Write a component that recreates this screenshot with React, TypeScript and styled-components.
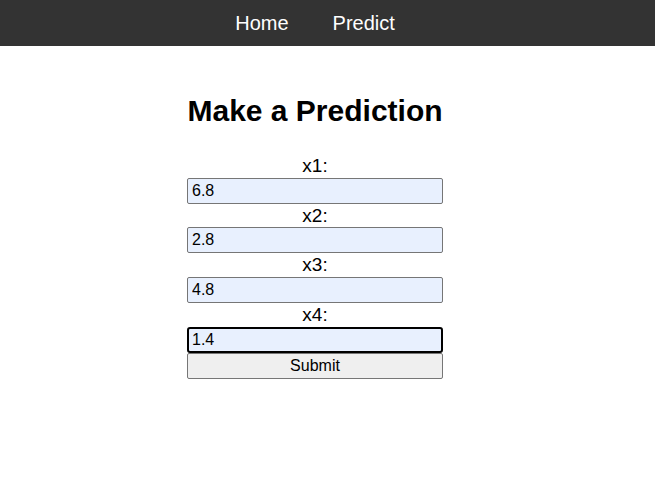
import React from "react";
import styled, { createGlobalStyle } from "styled-components";

const GlobalStyle = createGlobalStyle`
    body {
        margin: 0;
        background: #fff;
        font-family: "Liberation Sans", Arial, Helvetica, sans-serif;
    }
`;

const NavBar = styled.nav`
    background: #333;
    height: 46px;
    width: 100%;
`;

const NavInner = styled.div`
    width: 630px;
    height: 100%;
    display: flex;
    align-items: center;
    justify-content: center;
`;

const NavLink = styled.a`
    color: #fff;
    font-size: 20px;
    padding: 0 22px;
    text-decoration: none;
`;

const Main = styled.main`
    width: 630px;
    display: flex;
    flex-direction: column;
    align-items: center;
`;

const Title = styled.h1`
    font-size: 30px;
    font-weight: 700;
    margin: 48px 0 26px;
    color: #000;
`;

const Form = styled.form`
    width: 256px;
    display: flex;
    flex-direction: column;
`;

const Label = styled.label`
    display: block;
    text-align: center;
    font-size: 19px;
    line-height: 23.7px;
    color: #000;
`;

const Input = styled.input<{ $active?: boolean }>`
    box-sizing: border-box;
    width: 100%;
    height: 26px;
    margin: 0;
    font-family: "Liberation Sans", Arial, sans-serif;
    font-size: 16px;
    color: #000;
    background: #e8f0fe;
    border: ${(p) => (p.$active ? "2px solid #000" : "1px solid #767676")};
    border-radius: ${(p) => (p.$active ? "3px" : "2px")};
    padding: 0 0 0 ${(p) => (p.$active ? "3px" : "4px")};
    outline: none;
`;

const SubmitButton = styled.button`
    box-sizing: border-box;
    width: 100%;
    height: 26px;
    margin: 0;
    font-family: "Liberation Sans", Arial, sans-serif;
    font-size: 16px;
    color: #000;
    background: #efefef;
    border: 1px solid #767676;
    border-radius: 2px;
`;

const fields = [
    { name: "x1", value: "6.8" },
    { name: "x2", value: "2.8" },
    { name: "x3", value: "4.8" },
    { name: "x4", value: "1.4" },
];

export default function App() {
    return (
        <>
            <GlobalStyle />
            <NavBar>
                <NavInner>
                    <NavLink href="#">Home</NavLink>
                    <NavLink href="#">Predict</NavLink>
                </NavInner>
            </NavBar>
            <Main>
                <Title>Make a Prediction</Title>
                <Form onSubmit={(e) => e.preventDefault()}>
                    {fields.map((f, i) => (
                        <React.Fragment key={f.name}>
                            <Label htmlFor={f.name}>{f.name}:</Label>
                            <Input
                                id={f.name}
                                name={f.name}
                                defaultValue={f.value}
                                $active={i === fields.length - 1}
                            />
                        </React.Fragment>
                    ))}
                    <SubmitButton type="submit">Submit</SubmitButton>
                </Form>
            </Main>
        </>
    );
}
